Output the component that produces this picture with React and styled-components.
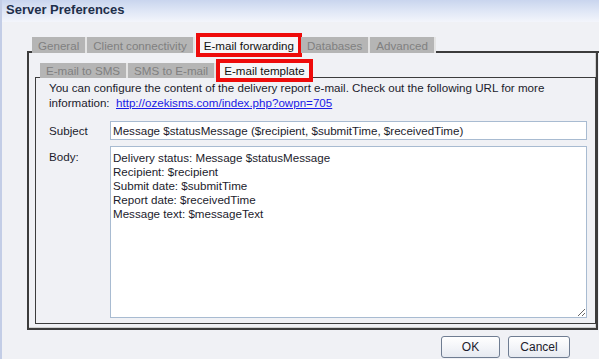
import React from "react";
import styled, { createGlobalStyle } from "styled-components";

const GlobalStyle = createGlobalStyle`
  html, body {
    margin: 0;
    padding: 0;
    background: #f0f1f5;
  }
  body {
    font-family: "Liberation Sans", Arial, sans-serif;
    font-size: 11.6px;
    color: #1b1b2c;
  }
`;

const outerTabs = ["General", "Client connectivity", "E-mail forwarding", "Databases", "Advanced"];
const innerTabs = ["E-mail to SMS", "SMS to E-mail", "E-mail template"];

const bodyText = `Delivery status: Message $statusMessage
Recipient: $recipient
Submit date: $submitTime
Report date: $receivedTime
Message text: $messageText`;

function App() {
    return (
        <Window>
            <GlobalStyle />
            <TitleBar>
                <Title>Server Preferences</Title>
            </TitleBar>
            <Content>
                <TabStrip>
                    <Edge width="5px" />
                    {outerTabs.map((t) => (
                        <Tab key={t} active={t === "E-mail forwarding"}>
                            {t}
                        </Tab>
                    ))}
                    <Edge grow />
                </TabStrip>
                <Panel>
                    <TabStrip inner>
                        <Edge width="5px" thin />
                        {innerTabs.map((t) => (
                            <Tab key={t} inner active={t === "E-mail template"}>
                                {t}
                            </Tab>
                        ))}
                        <Edge grow thin />
                    </TabStrip>
                    <InnerPanel>
                        <Intro>
                            You can configure the content of the delivery report e-mail. Check out the following URL for more
                            <br />
                            information:&nbsp; <Link href="#">http://ozekisms.com/index.php?owpn=705</Link>
                        </Intro>
                        <Form>
                            <Label>Subject</Label>
                            <Input
                                readOnly
                                value="Message $statusMessage ($recipient, $submitTime, $receivedTime)"
                            />
                            <Label top>Body:</Label>
                            <TextArea readOnly value={bodyText} />
                        </Form>
                    </InnerPanel>
                </Panel>
            </Content>
            <Footer>
                <Button width="59px">OK</Button>
                <Button width="62px">Cancel</Button>
            </Footer>
        </Window>
    );
}

export default App;

const Window = styled.div`
    width: 599px;
    height: 359px;
    box-sizing: border-box;
    border-left: 2px solid #c3cde6;
    background: #f0f1f5;
    display: flex;
    flex-direction: column;
    overflow: hidden;
`;

const TitleBar = styled.div`
    height: 22px;
    padding-left: 4px;
    display: flex;
    align-items: center;
    background: linear-gradient(to bottom, #c9d5ee 0%, #dde5f5 45%, #f3f5fb 100%);
`;

const Title = styled.div`
    font-family: "Liberation Sans", Arial, sans-serif;
    font-weight: bold;
    font-size: 13px;
    color: #1e2f4a;
    margin-top: -4px;
`;

const Content = styled.div`
    padding: 15px 0 0 25px;
    display: flex;
    flex-direction: column;
`;

const TabStrip = styled.div`
    display: flex;
    align-items: flex-end;
    height: ${({ inner }) => (inner ? "15px" : "16px")};
`;

const Edge = styled.div`
    width: ${({ width }) => width || "auto"};
    flex: ${({ grow }) => (grow ? "1" : "none")};
    align-self: flex-end;
    height: 0;
    border-bottom: ${({ thin }) => (thin ? "1.5px" : "2px")} solid #3c3c3c;
`;

const Tab = styled.div`
    height: 100%;
    box-sizing: border-box;
    padding: 0 ${({ active }) => (active ? "4px" : "6px")};
    margin: ${({ active, inner }) => (active ? (inner ? "0 4px 0 4px" : "0 3px 0 5px") : "0")};
    display: flex;
    align-items: center;
    white-space: nowrap;
    background: ${({ active }) => (active ? "#f6f6f8" : "#b5b5b5")};
    color: ${({ active }) => (active ? "#111" : "#808080")};
    border-right: ${({ active }) => (active ? "none" : "2px solid #e4e4e4")};
    outline: ${({ active }) => (active ? "4px solid #ee0b0b" : "none")};
`;

const Panel = styled.div`
    width: 571px;
    height: 277px;
    box-sizing: border-box;
    border: 2px solid #3c3c3c;
    border-top: none;
    box-shadow: inset -1px -1px 0 #d0d0d0;
    padding: 10px 0 0 6px;
    display: flex;
    flex-direction: column;
`;

const InnerPanel = styled.div`
    width: 561px;
    height: 246px;
    box-sizing: border-box;
    border: 1.5px solid #3c3c3c;
    border-top: none;
    border-right-width: 1px;
    padding: 2px 0 0 13px;
    display: flex;
    flex-direction: column;
`;

const Intro = styled.div`
    line-height: 15px;
    color: #1b1b2c;
    white-space: nowrap;
`;

const Link = styled.a`
    color: #1a1ae6;
    text-decoration: underline;
`;

const Form = styled.div`
    margin-top: 11px;
    display: grid;
    grid-template-columns: 61px 477px;
    row-gap: 6px;
`;

const Label = styled.div`
    align-self: ${({ top }) => (top ? "start" : "center")};
    padding-top: ${({ top }) => (top ? "4px" : "0")};
`;

const fieldBase = `
    box-sizing: border-box;
    border: 1px solid #a8bbd1;
    background: #fff;
    font-family: "Liberation Sans", Arial, sans-serif;
    font-size: 11.6px;
    color: #1b1b2c;
    outline: none;
    margin: 0;
`;

const Input = styled.input`
    ${fieldBase}
    height: 19px;
    padding: 0 2px;
`;

const TextArea = styled.textarea`
    ${fieldBase}
    height: 172px;
    padding: 4px 2px;
    line-height: 14px;
    resize: both;
`;

const Footer = styled.div`
    display: flex;
    justify-content: flex-end;
    gap: 8px;
    padding: 6px 29px 0 0;
`;

const Button = styled.button`
    width: ${({ width }) => width};
    height: 22px;
    border: 1px solid #6f7d92;
    border-radius: 3px;
    background: linear-gradient(to bottom, #ffffff 0%, #f2f4f8 55%, #e6eaf1 100%);
    font-family: "Liberation Sans", Arial, sans-serif;
    font-size: 12px;
    color: #1b1b2c;
    padding: 0;
`;
